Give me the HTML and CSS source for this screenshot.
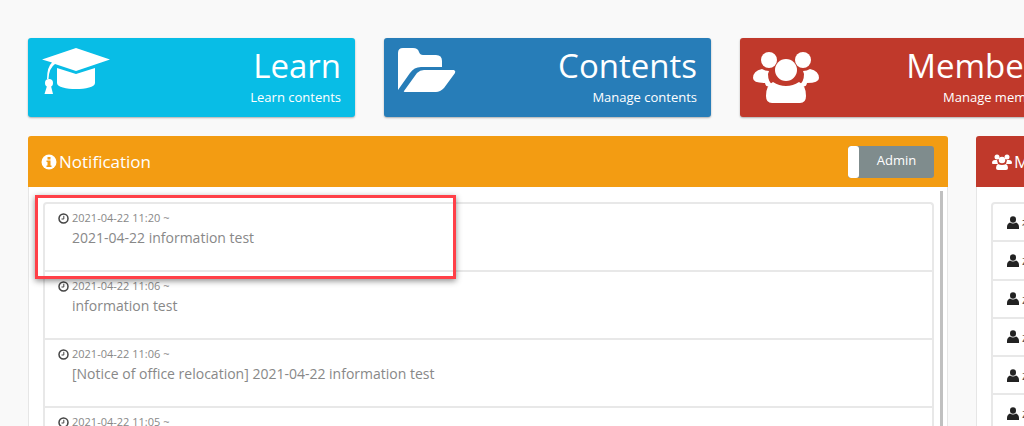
FILE: index.html
```html
<!DOCTYPE html>
<html lang="en">

<head>
	<title>Dashboard</title>
	<link rel="stylesheet" href="styles.css">
</head>

<body>
	<!-- Menu tiles -->
	<div class="tiles">
		<a class="tile tile-learn">
			<svg class="tile-icon" width="72" height="80" viewBox="0 0 72 80">
				<path d="M36 4 L70 15.5 L36 27 L15 20 Q9 24 8.5 35 L7 35 Q7 23 12 18.500 L2 15.500 Z" fill="#fff" />
				<path d="M17 24 L36 30 L55 24 V39 C55 47 17 47 17 39 Z" fill="#fff" />
				<circle cx="9" cy="39" r="4" fill="#fff" />
				<path d="M7 42 H11 L13 50 H4.500 Z" fill="#fff" />
			</svg>
			<div class="tile-text">
				<div class="tile-title">Learn</div>
				<div class="tile-sub">Learn contents</div>
			</div>
		</a>
		<a class="tile tile-contents">
			<svg class="tile-icon" width="72" height="80" viewBox="0 0 72 80">
				<path d="M2 46 V9 Q2 4 7 4 H17 Q22 4 23 8 Q24 11 27 11 H40 Q46 11 46 17 V23 H25 Q18 23 14 29 Z" fill="#fff" />
				<path d="M8 47 L21 29 Q24 26 28 26 H58 Q60 27 59 29 L48 44 Q44 48 40 48 H10 Q7 48 8 47 Z" fill="#fff" />
			</svg>
			<div class="tile-text">
				<div class="tile-title">Contents</div>
				<div class="tile-sub">Manage contents</div>
			</div>
		</a>
		<a class="tile tile-members">
			<svg class="tile-icon" width="72" height="80" viewBox="0 0 72 80">
				<circle cx="17" cy="16" r="8" fill="#fff" />
				<circle cx="51" cy="16" r="8" fill="#fff" />
				<path d="M10 25 Q13 27 17 27 L16 30 Q16 38 21 41 Q14 45 13 39 Q1 39 1 34 Q1 27 10 25 Z" fill="#fff" />
				<path d="M58 25 Q55 27 51 27 L52 30 Q52 38 47 41 Q54 45 55 39 Q67 39 67 34 Q67 27 58 25 Z" fill="#fff" />
				<circle cx="34" cy="26" r="11" fill="#fff" />
				<path d="M21 38 Q27 42 34 42 Q41 42 47 38 Q54 41 54 52 Q54 59 48 59 H20 Q14 59 14 52 Q14 41 21 38 Z" fill="#fff" />
			</svg>
			<div class="tile-text">
				<div class="tile-title">Members</div>
				<div class="tile-sub">Manage members</div>
			</div>
		</a>
	</div>

	<div class="columns">
		<!-- Notification panel -->
		<section class="panel panel-notice">
			<header class="panel-head head-notice">
				<h3 class="panel-title">
					<svg class="head-icon" width="16" height="16" viewBox="0 0 16 16">
						<circle cx="8" cy="8" r="7.500" fill="#fff" />
						<rect x="6.500" y="3" width="3" height="2.500" fill="#f39c12" />
						<path d="M5.500 6.500 H9.500 V11.500 H10.500 V13 H5.500 V11.500 H6.500 V8 H5.500 Z" fill="#f39c12" />
					</svg>Notification
				</h3>
				<div class="toggle"><span class="toggle-knob"></span><span class="toggle-label">Admin</span></div>
			</header>
			<div class="panel-body">
				<ul class="notices">
					<li class="notice">
						<div class="notice-date"><svg class="clock" width="11" height="11" viewBox="0 0 11 11"><circle cx="5.500" cy="5.500" r="4.500" fill="none" stroke="#444" stroke-width="1.500" /><path d="M5.800 2.800 V6 H3.500" fill="none" stroke="#444" /></svg>2021-04-22 11:20 ~</div>
						<div class="notice-text">2021-04-22 information test</div>
					</li>
					<li class="notice">
						<div class="notice-date"><svg class="clock" width="11" height="11" viewBox="0 0 11 11"><circle cx="5.500" cy="5.500" r="4.500" fill="none" stroke="#444" stroke-width="1.500" /><path d="M5.800 2.800 V6 H3.500" fill="none" stroke="#444" /></svg>2021-04-22 11:06 ~</div>
						<div class="notice-text">information test</div>
					</li>
					<li class="notice">
						<div class="notice-date"><svg class="clock" width="11" height="11" viewBox="0 0 11 11"><circle cx="5.500" cy="5.500" r="4.500" fill="none" stroke="#444" stroke-width="1.500" /><path d="M5.800 2.800 V6 H3.500" fill="none" stroke="#444" /></svg>2021-04-22 11:06 ~</div>
						<div class="notice-text">[Notice of office relocation] 2021-04-22 information test</div>
					</li>
					<li class="notice">
						<div class="notice-date"><svg class="clock" width="11" height="11" viewBox="0 0 11 11"><circle cx="5.500" cy="5.500" r="4.500" fill="none" stroke="#444" stroke-width="1.500" /><path d="M5.800 2.800 V6 H3.500" fill="none" stroke="#444" /></svg>2021-04-22 11:05 ~</div>
						<div class="notice-text">information test</div>
					</li>
				</ul>
				<div class="scroll-bar"></div>
			</div>
		</section>

		<!-- Members panel -->
		<section class="panel panel-members">
			<header class="panel-head head-members">
				<h3 class="panel-title">
					<svg class="head-icon" width="20" height="16" viewBox="0 0 20 16">
						<circle cx="5" cy="3" r="2.500" fill="#fff" />
						<circle cx="15" cy="3" r="2.500" fill="#fff" />
						<path d="M0 9 Q0 6 3 6 H5 L6 10 H1 Q0 10 0 9 Z M20 9 Q20 6 17 6 H15 L14 10 H19 Q20 10 20 9 Z" fill="#fff" />
						<circle cx="10" cy="6" r="3.300" fill="#fff" />
						<path d="M6 10 Q10 12 14 10 Q16 11 16 14 Q16 16 14 16 H6 Q4 16 4 14 Q4 11 6 10 Z" fill="#fff" />
					</svg>Members
				</h3>
			</header>
			<div class="panel-body">
				<ul class="members">
					<li class="member"><svg class="user" width="12" height="13" viewBox="0 0 12 13"><ellipse cx="6" cy="3.500" rx="3" ry="3.300" fill="#222" /><path d="M3 6.500 Q6 8.500 9 6.500 Q12 7.500 12 11 V13 H0 V11 Q0 7.500 3 6.500 Z" fill="#222" /></svg>祐</li>
					<li class="member"><svg class="user" width="12" height="13" viewBox="0 0 12 13"><ellipse cx="6" cy="3.500" rx="3" ry="3.300" fill="#222" /><path d="M3 6.500 Q6 8.500 9 6.500 Q12 7.500 12 11 V13 H0 V11 Q0 7.500 3 6.500 Z" fill="#222" /></svg>z</li>
					<li class="member"><svg class="user" width="12" height="13" viewBox="0 0 12 13"><ellipse cx="6" cy="3.500" rx="3" ry="3.300" fill="#222" /><path d="M3 6.500 Q6 8.500 9 6.500 Q12 7.500 12 11 V13 H0 V11 Q0 7.500 3 6.500 Z" fill="#222" /></svg>z</li>
					<li class="member"><svg class="user" width="12" height="13" viewBox="0 0 12 13"><ellipse cx="6" cy="3.500" rx="3" ry="3.300" fill="#222" /><path d="M3 6.500 Q6 8.500 9 6.500 Q12 7.500 12 11 V13 H0 V11 Q0 7.500 3 6.500 Z" fill="#222" /></svg>z</li>
					<li class="member"><svg class="user" width="12" height="13" viewBox="0 0 12 13"><ellipse cx="6" cy="3.500" rx="3" ry="3.300" fill="#222" /><path d="M3 6.500 Q6 8.500 9 6.500 Q12 7.500 12 11 V13 H0 V11 Q0 7.500 3 6.500 Z" fill="#222" /></svg>z</li>
					<li class="member"><svg class="user" width="12" height="13" viewBox="0 0 12 13"><ellipse cx="6" cy="3.500" rx="3" ry="3.300" fill="#222" /><path d="M3 6.500 Q6 8.500 9 6.500 Q12 7.500 12 11 V13 H0 V11 Q0 7.500 3 6.500 Z" fill="#222" /></svg>z</li>
				</ul>
			</div>
		</section>
	</div>

	<!-- Highlight frame over the first notice -->
	<div class="highlight"></div>
</body>

</html>
```

FILE: styles.css
```css
html,
body {
	height: 426px;
	overflow: hidden;
}

body {
	margin: 0;
	padding: 38px 0 0 28px;
	box-sizing: border-box;
	width: 1024px;
	background-color: #f9f9f9;
	font-family: "Open Sans", "Noto Sans CJK JP", sans-serif;
	position: relative;
}

/* Menu tiles */
.tiles {
	display: flex;
	gap: 29px;
	margin-bottom: 19px;
}

.tile {
	flex: 0 0 327px;
	height: 79px;
	box-sizing: border-box;
	padding: 6px 14px 0 12px;
	display: flex;
	justify-content: space-between;
	border-radius: 3px;
	color: #fff;
	box-shadow: 0 1px 2px rgba(0, 0, 0, 0.3);
}

.tile-learn {
	background-color: #08bde6;
}

.tile-contents {
	background-color: #277db8;
}

.tile-members {
	background-color: #c0392b;
}

.tile-icon {
	flex: none;
}

.tile-text {
	text-align: right;
}

.tile-title {
	font-size: 33px;
	line-height: 44px;
}

.tile-sub {
	font-size: 13px;
	line-height: 18px;
	margin-top: 0;
}

/* Panels */
.columns {
	display: flex;
	gap: 28px;
}

.panel {
	flex: none;
	height: 320px;
	box-sizing: border-box;
	background-color: #fff;
	border: 1px solid #e6e6e6;
	border-top: none;
	border-radius: 3px 3px 0 0;
}

.panel-notice {
	width: 920px;
}

.panel-members {
	width: 300px;
}

.panel-head {
	height: 51px;
	margin: 0 -1px;
	padding: 0 14px 0 13px;
	display: flex;
	align-items: center;
	justify-content: space-between;
	border-radius: 3px 3px 0 0;
	color: #fff;
}

.head-notice {
	background-color: #f39c12;
}

.head-members {
	background-color: #c0392b;
	padding-left: 16px;
}

.panel-title {
	margin: 0;
	font-size: 17px;
	font-weight: normal;
	display: flex;
	align-items: center;
}

.head-icon {
	margin-right: 2px;
}

/* Admin toggle */
.toggle {
	width: 86px;
	height: 32px;
	display: flex;
	border-radius: 3px;
	background-color: #7f8c8d;
	overflow: hidden;
}

.toggle-knob {
	flex: 0 0 11px;
	background-color: #fff;
	border-radius: 3px;
}

.toggle-label {
	flex: 1;
	text-align: center;
	font-size: 13px;
	line-height: 28px;
}

.panel-body {
	padding: 15px 13px 0 14px;
	position: relative;
}

/* Notices list */
.notices,
.members {
	list-style: none;
	margin: 0;
	padding: 0;
	border: 2px solid #e8e8e8;
	border-bottom: none;
	border-radius: 4px 4px 0 0;
}

.notice {
	height: 68px;
	box-sizing: border-box;
	padding: 6px 0 0 13px;
	border-bottom: 2px solid #e8e8e8;
	color: #888;
}

.notice-date {
	font-size: 11px;
	line-height: 16px;
	display: flex;
	align-items: center;
}

.clock {
	margin-right: 3px;
}

.notice-text {
	font-size: 14px;
	line-height: 24px;
	padding-left: 14px;
}

.scroll-bar {
	position: absolute;
	top: 4px;
	right: 4px;
	width: 3px;
	height: 300px;
	background-color: #c0c0c0;
}

/* Members list */
.members {
	margin-left: 0;
}

.member {
	height: 38.250px;
	box-sizing: border-box;
	padding-left: 14px;
	display: flex;
	align-items: center;
	border-bottom: 2px solid #e8e8e8;
	font-size: 13px;
	color: #555;
}

.user {
	margin-right: 3px;
}

/* Red frame drawn over the first notice */
.highlight {
	position: absolute;
	left: 35px;
	top: 195px;
	width: 415px;
	height: 78px;
	border: 3px solid #ff4048;
	box-shadow: 0 2px 6px rgba(0, 0, 0, 0.45);
}
```
